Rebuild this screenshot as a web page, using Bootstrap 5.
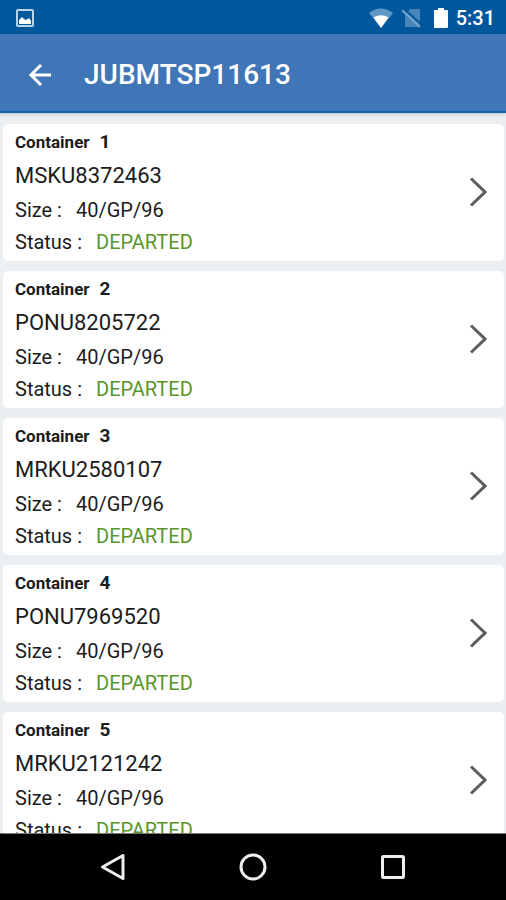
<!DOCTYPE html>
<html lang="en">
<head>
<meta charset="utf-8">
<meta name="viewport" content="width=device-width, initial-scale=1">
<title>JUBMTSP11613</title>
<link href="https://cdn.jsdelivr.net/npm/bootstrap@5.3.0/dist/css/bootstrap.min.css" rel="stylesheet">
<style>
body { font-family: Roboto, "Liberation Sans", sans-serif; background: #ebeff1; color: #1c1c1c; }
.status-bar { height: 34px; background: #00579b; padding: 2px 11px 0 16px; }
.status-time { font-size: 20px; line-height: 24px; font-weight: 500; }
.app-bar { height: 79px; background: #4075b8; border-bottom: 2px solid #0f64ae; box-shadow: 0 1px 3px #0003; padding: 4px 0 0 24px; z-index: 1; }
.app-title { font-size: 28px; line-height: 32px; font-weight: 500; }
.list-area { padding: 11px 2px 0 3px; gap: 10px; min-height: 0; }
.box-card { border-radius: 5px; padding: 2px 17px 3px 12px; }
.box-card:hover { background: #fafafa; }
.box-label { height: 32px; font-size: 17px; line-height: 32px; font-weight: 700; gap: 10px; }
.box-index { font-size: 19px; }
.box-number { font-size: 22px; line-height: 36px; }
.box-line { font-size: 20px; line-height: 32px; gap: 14px; }
.departed { color: #58962a; }
.nav-keys { height: 67px; background: #000; border-top: 1px solid #777; padding: 0 43px; }
svg { display: block; flex-shrink: 0; }
</style>
<script src="https://cdn.jsdelivr.net/npm/bootstrap@5.3.0/dist/js/bootstrap.bundle.min.js"></script>
</head>
<body class="vh-100 d-flex flex-column overflow-hidden">
<div class="status-bar d-flex align-items-center flex-shrink-0 text-white">
  <svg width="18" height="18" viewBox="0 0 18 18" role="img" aria-label="Screenshot saved"><rect x="1" y="1" width="16" height="16" rx="1" fill="none" stroke="#b9d5ec" stroke-width="2"/><path d="M3 15V11L6 8L8 10L10 11L13 9L15 12V15Z" fill="#fff"/></svg>
  <div class="d-flex align-items-center ms-auto">
    <svg width="26" height="20" viewBox="0 0 26 20" role="img" aria-label="Wi-Fi"><path d="M1 5Q13-4 25 5L13 20Z" fill="#5f97c5"/><path d="M5.500 9.500Q13 5 20.500 9.500L13 20Z" fill="#fff"/></svg>
    <svg class="ms-2" width="20" height="20" viewBox="0 0 20 20" role="img" aria-label="No SIM"><path d="M8 1H17L18 2V18L17 19H3V7Z" fill="#4686ba"/><path d="M1 0L20 17" stroke="#00579b" stroke-width="2"/><path d="M0 2L18 19" stroke="#74a5cc" stroke-width="2"/></svg>
    <svg class="ms-2 me-1" width="22" height="22" viewBox="0 0 22 22" role="img" aria-label="Battery"><path d="M8 1H14V3H17Q18 3 18 4V20Q18 21 17 21H5Q4 21 4 20V4Q4 3 5 3H8Z" fill="#fff"/></svg>
    <span class="status-time">5:31</span>
  </div>
</div>
<header class="app-bar d-flex align-items-center flex-shrink-0 position-relative text-white">
  <button type="button" class="btn p-1 border-0 text-white" aria-label="Back"><svg width="24" height="24" viewBox="0 0 24 24" fill="none" stroke="currentColor" stroke-width="3"><path d="M23 12H3M13 2L3 12L13 22"/></svg></button>
  <h1 class="app-title mb-0 ms-4 ps-1">JUBMTSP11613</h1>
</header>
<main class="list-area d-flex flex-column flex-grow-1 overflow-hidden" id="containers"></main>
<nav class="nav-keys d-flex align-items-center justify-content-around flex-shrink-0" aria-label="System">
  <button type="button" class="btn p-1 border-0 text-white" aria-label="Back"><svg width="28" height="28" viewBox="0 0 28 28" fill="none" stroke="#eee" stroke-width="3" stroke-linejoin="round"><path d="M24 2.500V25.500L3.500 14Z"/></svg></button>
  <button type="button" class="btn p-1 border-0 text-white" aria-label="Home"><svg width="28" height="28" viewBox="0 0 28 28" fill="none" stroke="#eee" stroke-width="3"><circle cx="14" cy="14" r="12"/></svg></button>
  <button type="button" class="btn p-1 border-0 text-white" aria-label="Recent apps"><svg width="28" height="28" viewBox="0 0 28 28" fill="none" stroke="#eee" stroke-width="3"><rect x="3.500" y="3.500" width="21" height="21" rx="1"/></svg></button>
</nav>
<script>
const numbers = ["MSKU8372463", "PONU8205722", "MRKU2580107", "PONU7969520", "MRKU2121242"];
document.getElementById("containers").innerHTML = numbers.map((number, i) => `
  <a href="#${number}" class="box-card d-flex align-items-center justify-content-between flex-shrink-0 bg-white text-reset text-decoration-none">
    <div>
      <div class="box-label d-flex align-items-baseline"><span>Container</span><span class="box-index">${i + 1}</span></div>
      <div class="box-number">${number}</div>
      <div class="box-line d-flex"><span>Size :</span><span>40/GP/96</span></div>
      <div class="box-line d-flex"><span>Status :</span><span class="departed">DEPARTED</span></div>
    </div>
    <svg width="18" height="30" viewBox="0 0 18 30" fill="none" stroke="#5c5c5c" stroke-width="3" aria-hidden="true"><path d="M2 1.500L16 15L2 28.500"/></svg>
  </a>`).join("");
</script>
</body>
</html>
